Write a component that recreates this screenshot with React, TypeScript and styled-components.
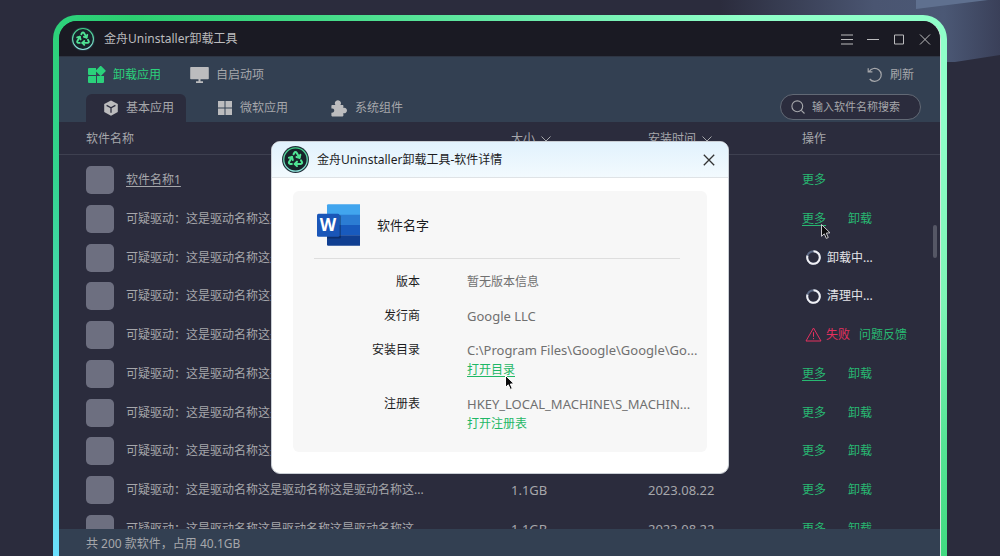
import React from "react";
import styled, { createGlobalStyle, css } from "styled-components";
import { Recycle } from "lucide-react";

const GlobalStyle = createGlobalStyle`
  * { box-sizing: border-box; }
  body {
    margin: 0;
    background: #2b2c3d;
    color: #a6a7ab;
    font: 12px/20px "Noto Sans", "Noto Sans CJK SC", sans-serif;
  }
  button, input { font: inherit; color: inherit; }
  button { padding: 0; border: 0; background: none; cursor: pointer; }
  a { color: inherit; text-decoration: none; }
  svg { display: block; flex: none; }
`;

const Page = styled.div`
  position: relative;
  display: flex;
  height: 100vh;
  padding: 15px 53px 0;
  overflow: hidden;
`;

const Backdrop = styled.svg`
  position: absolute;
  top: 0;
  right: 0;
`;

const Frame = styled.div`
  position: relative;
  display: flex;
  flex: 1;
  min-width: 0;
  padding: 6px 6px 0;
  border-radius: 24px 24px 0 0;
  background:
    linear-gradient(to bottom, #2dd17a 20px, #33d48f 160px, #5fe0d4 440px, #6be0ff 541px) left / 24px 100% no-repeat,
    linear-gradient(to bottom, #8fffc9 100px, #7df5b5 290px, #55e495 430px, #40da80 541px) right / 24px 100% no-repeat,
    linear-gradient(to right, #2dd17a, #2cce71 9%, #44dc88 30%, #70eeaf 56%, #8fffc9 77%);
`;

const Window = styled.main`
  display: flex;
  flex: 1;
  flex-direction: column;
  min-width: 0;
  overflow: hidden;
  border-right: 1px solid #d3e6dd;
  border-radius: 18px 18px 0 0;
  background: #2b2c3d;
`;

const TitleBar = styled.header`
  display: flex;
  flex: none;
  align-items: center;
  gap: 9px;
  height: 35px;
  padding: 1px 9px 0 12px;
  background: #1a1a23;
  color: #bcbcbe;
`;

const Title = styled.h1`
  flex: 1;
  margin: 0;
  font-size: 12px;
  font-weight: 400;
`;

const WindowControls = styled.div`
  display: flex;
  gap: 14px;
`;

const IconButton = styled.button`
  display: grid;
  place-items: center;
  width: 12px;
  height: 20px;
`;

const Toolbar = styled.div`
  flex: none;
  border-top: 1px solid #2e3543;
  background: #334052;
`;

const PrimaryNav = styled.nav`
  display: flex;
  align-items: center;
  gap: 29px;
  height: 37px;
  padding: 0 26px 2px 29px;
`;

const NavButton = styled.button<{ $active?: boolean; $end?: boolean }>`
  display: flex;
  align-items: center;
  gap: 7px;
  ${(p) => p.$active && css`color: #2bd17b;`}
  ${(p) => p.$end && css`margin-left: auto;`}
`;

const TabBar = styled.div`
  display: flex;
  align-items: flex-end;
  height: 28px;
  padding: 0 19px 0 27px;
`;

const Tab = styled.button<{ $active?: boolean }>`
  display: flex;
  align-items: center;
  gap: 7px;
  height: 28px;
  padding: 0 12px 0 17px;
  margin-right: 14px;
  border-radius: 6px 6px 0 0;
  background: ${(p) => (p.$active ? "#2b2c3d" : "transparent")};
`;

const SearchBox = styled.label`
  display: flex;
  align-items: center;
  align-self: center;
  gap: 7px;
  width: 141px;
  height: 26px;
  margin-left: auto;
  margin-bottom: 3px;
  padding: 0 10px;
  border: 1px solid #626975;
  border-radius: 13px;
  background: #2b2c3d;
`;

const SearchInput = styled.input`
  width: 100%;
  min-width: 0;
  padding: 0;
  border: 0;
  outline: 0;
  background: none;
  font-size: 11px;
  &::placeholder { color: #a6a7ab; opacity: 1; }
`;

const ListArea = styled.section`
  position: relative;
  flex: 1;
  min-height: 0;
  overflow: hidden;
`;

const AppTable = styled.table`
  width: 100%;
  border-collapse: collapse;
  table-layout: fixed;
`;

const HeadCell = styled.th<{ $width?: number }>`
  width: ${(p) => (p.$width ? `${p.$width}px` : "auto")};
  padding: 0 0 5px;
  font-weight: 400;
  text-align: left;
`;

const HeadLabel = styled.div<{ $first?: boolean }>`
  display: flex;
  align-items: center;
  gap: 6px;
  height: 33px;
  padding-top: 2px;
  padding-left: ${(p) => (p.$first ? 27 : 0)}px;
  border-bottom: 1px solid #3e4050;
`;

const AppRow = styled.tr<{ $tall?: boolean }>`
  height: ${(p) => (p.$tall ? 39 : 38)}px;
`;

const Cell = styled.td<{ $latin?: boolean }>`
  padding: 0;
  font-size: ${(p) => (p.$latin ? 13 : 12)}px;
`;

const NameCell = styled.div`
  display: flex;
  align-items: center;
  gap: 12px;
  padding-left: 27px;
`;

const AppIcon = styled.span`
  flex: none;
  width: 28px;
  height: 28px;
  border-radius: 5px;
  background: #6d6f80;
`;

const AppName = styled.span<{ $underlined?: boolean }>`
  width: 308px;
  overflow: hidden;
  white-space: nowrap;
  text-overflow: ellipsis;
  ${(p) => p.$underlined && css`
    text-decoration: underline;
    text-underline-offset: 2px;
  `}
`;

const Actions = styled.div<{ $gap?: number; $inset?: number }>`
  display: flex;
  align-items: center;
  gap: ${(p) => p.$gap ?? 22}px;
  padding-left: ${(p) => p.$inset ?? 0}px;
  white-space: nowrap;
`;

const Action = styled.button<{ $underlined?: boolean }>`
  position: relative;
  color: #28b872;
  ${(p) => p.$underlined && css`
    text-decoration: underline;
    text-underline-offset: 2px;
  `}
`;

const FeedbackLink = styled.a`
  margin-left: 5px;
  color: #28b872;
`;

const Progress = styled.span`
  color: #e4e4e8;
`;

const Failure = styled.span`
  color: #e5305f;
`;

const Scrollbar = styled.div`
  position: absolute;
  top: 103px;
  right: 3px;
  width: 4px;
  height: 33px;
  border-radius: 2px;
  background: #555765;
`;

const Pointer = styled.svg<{ $x: number }>`
  position: absolute;
  top: 15px;
  left: ${(p) => p.$x}px;
  overflow: visible;
`;

const StatusBar = styled.footer`
  flex: none;
  height: 27px;
  padding: 5px 27px 0;
  background: #334052;
`;

const Overlay = styled.div`
  position: absolute;
  inset: 0;
  display: flex;
  align-items: flex-start;
  justify-content: center;
  padding-top: 141px;
`;

const Dialog = styled.section`
  width: 458px;
  overflow: hidden;
  border: 1px solid #c9ced4;
  border-radius: 9px;
  background: #fff;
  color: #1c1c1e;
`;

const DialogHeader = styled.header`
  display: flex;
  align-items: center;
  gap: 8px;
  height: 36px;
  padding: 0 13px 0 10px;
  border-bottom: 1px solid #dfe3e6;
  background: linear-gradient(#e1f2fd, #f3fafe);
`;

const DialogTitle = styled.h2`
  flex: 1;
  margin: 0;
  font-size: 12px;
  font-weight: 400;
`;

const DetailCard = styled.div`
  margin: 13px 21px 21px;
  padding: 0 27px 18px 21px;
  border-radius: 6px;
  background: #f7f7f7;
`;

const AppHeading = styled.div`
  display: flex;
  align-items: center;
  gap: 17px;
  height: 68px;
  padding-left: 3px;
  border-bottom: 1px solid #dedede;
  font-size: 13px;
`;

const DetailList = styled.dl`
  display: grid;
  grid-template-columns: 106px 1fr;
  gap: 14px 47px;
  margin: 13px -16px 0 0;
`;

const Term = styled.dt`
  text-align: right;
`;

const Detail = styled.dd<{ $latin?: boolean }>`
  margin: 0;
  white-space: nowrap;
  color: #707070;
  font-size: ${(p) => (p.$latin ? 13 : 12)}px;
`;

const DetailLink = styled.a<{ $underlined?: boolean }>`
  position: relative;
  display: table;
  font-size: 12px;
  color: #1fb866;
  ${(p) => p.$underlined && css`
    text-decoration: underline;
    text-underline-offset: 2px;
  `}
`;

function Logo({ size }: { size: number }) {
  return (
    <svg width={size} height={size} viewBox="0 0 26 26">
      <defs>
        <linearGradient id="ring" x1="0" y1="0" x2="0" y2="1">
          <stop offset="0" stopColor="#3ecf85" />
          <stop offset="1" stopColor="#8fe6de" />
        </linearGradient>
      </defs>
      <circle cx="13" cy="13" r="13" fill="#23313b" />
      <circle cx="13" cy="13" r="11.3" fill="#17232a" stroke="url(#ring)" strokeWidth="1.2" />
      <Recycle x={4.5} y={3.8} width={17} height={17} color="#4fe394" strokeWidth={2.8} />
    </svg>
  );
}

const GridIcon = () => (
  <svg width="18" height="18" viewBox="0 0 18 18" fill="currentColor">
    <path d="M1 2h7v7H1a1 1 0 0 1-1-1V3a1 1 0 0 1 1-1zM1 10h7v7H1a1 1 0 0 1-1-1v-5a1 1 0 0 1 1-1zM9 10h7v6a1 1 0 0 1-1 1H9z" />
    <rect x="8.9" y="1.1" width="7.6" height="7.6" rx="1" transform="rotate(45 12.7 4.9)" />
  </svg>
);

const MonitorIcon = () => (
  <svg width="19" height="18" viewBox="0 0 19 18" fill="#bcbcbe">
    <path d="M1 1h17a.8.8 0 0 1 .8.8v10.6a.8.8 0 0 1-.8.8H1a.8.8 0 0 1-.8-.8V1.8A.8.8 0 0 1 1 1zM8.5 13h2v2.5h-2zM6 15.2h7V17H6z" />
  </svg>
);

const BoxIcon = () => (
  <svg width="16" height="16" viewBox="0 0 16 16">
    <path d="M8 .4 14.8 4v8L8 15.8 1.2 12V4z" fill="#bcbcbe" />
    <path d="M3.6 5.4 8 7.8l4.4-2.4M8 7.8v5" fill="none" stroke="#2b2c3d" strokeWidth="1.3" />
  </svg>
);

const TilesIcon = () => (
  <svg width="16" height="16" viewBox="0 0 16 16" fill="#bcbcbe">
    <path d="M1 1h6.500v6.500H1zM8.500 1H15v6.500H8.500zM1 8.500h6.500V15H1zM8.500 8.500H15V15H8.500z" />
  </svg>
);

const PuzzleIcon = () => (
  <svg width="17" height="17" viewBox="0 0 17 17" fill="#bcbcbe">
    <path d="M1.200 5H4.400A3 3 0 1 1 9.400 5H11.600a.8.8 0 0 1 .8.8V7.900A2.700 2.700 0 1 1 12.400 13V15.600a.8.8 0 0 1-.8.8H1.200a.8.8 0 0 1-.8-.8V12.700A2.200 2.200 0 1 0 .4 8.500V5.800a.8.8 0 0 1 .8-.8z" />
  </svg>
);

const RefreshIcon = () => (
  <svg width="16" height="16" viewBox="0 0 16 16" fill="none" stroke="currentColor" strokeWidth="1.2">
    <path d="M2.2 4.500A6.500 6.500 0 1 1 2.700 12M1.200 1.200V4.800H5.400" />
  </svg>
);

const SearchIcon = () => (
  <svg width="14" height="14" viewBox="0 0 14 14" fill="none" stroke="currentColor" strokeWidth="1.1">
    <circle cx="6.3" cy="6.3" r="5.4" />
    <path d="m10.300 10.300 3.200 3.200" />
  </svg>
);

const ChevronIcon = () => (
  <svg width="10" height="6" viewBox="0 0 10 6" fill="none" stroke="currentColor">
    <path d="m.5.5 4.500 4.500L9.500.5" />
  </svg>
);

const SpinnerIcon = () => (
  <svg width="15" height="15" viewBox="0 0 15 15" fill="none" strokeWidth="2">
    <circle cx="7.5" cy="7.5" r="6.3" stroke="#5d6a86" />
    <path d="M7.500 1.200A6.300 6.300 0 1 1 1.500 5.600" stroke="#f0f0f4" />
  </svg>
);

const WarningIcon = () => (
  <svg width="17" height="15" viewBox="0 0 17 15" fill="none" stroke="#e5305f" strokeLinejoin="round">
    <path d="M8.500 1 16 14H1zM8.500 5.200v4.600M8.500 11v1.200" />
  </svg>
);

const WordLetter = styled.text`
  fill: #fff;
  font: 700 17px "Open Sans", "Noto Sans", sans-serif;
  text-anchor: middle;
`;

const WordIcon = () => (
  <svg width="43" height="42" viewBox="0 0 43 42">
    <path d="M10 11V1.500A1.200 1.200 0 0 1 11.200.3H43V11z" fill="#41a5ee" />
    <path d="M10 10.700h33V21H10z" fill="#2b7cd3" />
    <path d="M10 21h33v10.500H10z" fill="#185abd" />
    <path d="M10 31.300h33V41.700H11.200A1.200 1.200 0 0 1 10 40.500z" fill="#103f91" />
    <path d="M10 11h12.500a1.500 1.500 0 0 1 1.500 1.500V33a1.500 1.500 0 0 1-1.500 1.500H10z" opacity=".25" />
    <rect y="9.7" width="22.5" height="23" rx="1.5" fill="#1a56b8" />
    <WordLetter x="11" y="27">W</WordLetter>
  </svg>
);

function Cursor({ x, outline }: { x: number; outline: string }) {
  return (
    <Pointer $x={x} width="10" height="15" viewBox="0 0 10 15" aria-hidden>
      <path d="M.5.5v11.800l2.800-2.500 2 4.600 2-.9-2-4.400 3.700-.3z" fill="#0b0b0d" stroke={outline} />
    </Pointer>
  );
}

type Status = "more" | "idle" | "hover" | "uninstalling" | "cleaning" | "failed" | "visited";

const statuses: Status[] = ["more", "hover", "uninstalling", "cleaning", "failed", "visited", "idle", "idle", "idle", "idle"];

function RowActions({ status }: { status: Status }) {
  if (status === "uninstalling" || status === "cleaning") {
    return (
      <Actions $gap={6} $inset={4}>
        <SpinnerIcon />
        <Progress>{status === "cleaning" ? "清理中..." : "卸载中..."}</Progress>
      </Actions>
    );
  }
  if (status === "failed") {
    return (
      <Actions $gap={4} $inset={3}>
        <WarningIcon />
        <Failure>失败</Failure>
        <FeedbackLink href="#feedback">问题反馈</FeedbackLink>
      </Actions>
    );
  }
  return (
    <Actions>
      <Action $underlined={status === "hover" || status === "visited"}>
        更多
        {status === "hover" && <Cursor x={19} outline="#c8c8cc" />}
      </Action>
      {status !== "more" && <Action>卸载</Action>}
    </Actions>
  );
}

export default function App() {
  return (
    <Page>
      <GlobalStyle />
      <Backdrop width="280" height="64" viewBox="0 0 280 64" aria-hidden>
        <defs>
          <linearGradient id="beam" x1="0" x2="1">
            <stop offset="0" stopColor="#2b2c3d" />
            <stop offset=".55" stopColor="#4a5571" />
            <stop offset=".8" stopColor="#4b5875" />
            <stop offset="1" stopColor="#3a4059" />
          </linearGradient>
        </defs>
        <path d="M0 0h280v55l-45 7H0z" fill="url(#beam)" />
        <path d="M196 0h72l-72 9z" fill="#5f708f" />
      </Backdrop>
      <Frame>
        <Window>
          <TitleBar>
            <Logo size={24} />
            <Title>金舟Uninstaller卸载工具</Title>
            <WindowControls>
              <IconButton aria-label="菜单">
                <svg width="12" height="11" fill="none" stroke="currentColor"><path d="M0 1h12M0 5.500h12M0 10h12" /></svg>
              </IconButton>
              <IconButton aria-label="最小化">
                <svg width="12" height="11" fill="none" stroke="currentColor"><path d="M0 5.500h12" /></svg>
              </IconButton>
              <IconButton aria-label="最大化">
                <svg width="12" height="11" fill="none" stroke="currentColor"><path d="M1.500 1h9v9h-9z" /></svg>
              </IconButton>
              <IconButton aria-label="关闭">
                <svg width="12" height="11" fill="none" stroke="currentColor"><path d="m1 .5 10 10M11 .5l-10 10" /></svg>
              </IconButton>
            </WindowControls>
          </TitleBar>
          <Toolbar>
            <PrimaryNav>
              <NavButton $active><GridIcon />卸载应用</NavButton>
              <NavButton><MonitorIcon />自启动项</NavButton>
              <NavButton $end><RefreshIcon />刷新</NavButton>
            </PrimaryNav>
            <TabBar>
              <Tab $active><BoxIcon />基本应用</Tab>
              <Tab><TilesIcon />微软应用</Tab>
              <Tab><PuzzleIcon />系统组件</Tab>
              <SearchBox>
                <SearchIcon />
                <SearchInput type="text" placeholder="输入软件名称搜索" aria-label="输入软件名称搜索" />
              </SearchBox>
            </TabBar>
          </Toolbar>
          <ListArea>
            <AppTable>
              <thead>
                <tr>
                  <HeadCell><HeadLabel $first>软件名称</HeadLabel></HeadCell>
                  <HeadCell $width={137}><HeadLabel>大小 <ChevronIcon /></HeadLabel></HeadCell>
                  <HeadCell $width={154}><HeadLabel>安装时间 <ChevronIcon /></HeadLabel></HeadCell>
                  <HeadCell $width={138}><HeadLabel>操作</HeadLabel></HeadCell>
                </tr>
              </thead>
              <tbody>
                {statuses.map((status, i) => (
                  <AppRow key={i} $tall={i % 4 !== 3}>
                    <Cell>
                      <NameCell>
                        <AppIcon />
                        <AppName $underlined={i === 0}>
                          {i === 0 ? "软件名称1" : "可疑驱动：这是驱动名称这是驱动名称这是驱动名称这..."}
                        </AppName>
                      </NameCell>
                    </Cell>
                    <Cell $latin>1.1GB</Cell>
                    <Cell $latin>2023.08.22</Cell>
                    <Cell><RowActions status={status} /></Cell>
                  </AppRow>
                ))}
              </tbody>
            </AppTable>
            <Scrollbar />
          </ListArea>
          <StatusBar>共 200 款软件，占用 40.1GB</StatusBar>
        </Window>
      </Frame>
      <Overlay>
        <Dialog role="dialog" aria-labelledby="dialog-title">
          <DialogHeader>
            <Logo size={27} />
            <DialogTitle id="dialog-title">金舟Uninstaller卸载工具-软件详情</DialogTitle>
            <IconButton aria-label="关闭">
              <svg width="12" height="12" fill="none" stroke="#333" strokeWidth="1.3"><path d="m.8.8 10.400 10.400M11.200.8.8 11.200" /></svg>
            </IconButton>
          </DialogHeader>
          <DetailCard>
            <AppHeading><WordIcon />软件名字</AppHeading>
            <DetailList>
              <Term>版本</Term>
              <Detail>暂无版本信息</Detail>
              <Term>发行商</Term>
              <Detail $latin>Google LLC</Detail>
              <Term>安装目录</Term>
              <Detail $latin>
                C:\Program Files\Google\Google\Go...
                <DetailLink href="#directory" $underlined>
                  打开目录
                  <Cursor x={38} outline="#ffffff" />
                </DetailLink>
              </Detail>
              <Term>注册表</Term>
              <Detail $latin>
                HKEY_LOCAL_MACHINE\S_MACHIN...
                <DetailLink href="#registry">打开注册表</DetailLink>
              </Detail>
            </DetailList>
          </DetailCard>
        </Dialog>
      </Overlay>
    </Page>
  );
}
